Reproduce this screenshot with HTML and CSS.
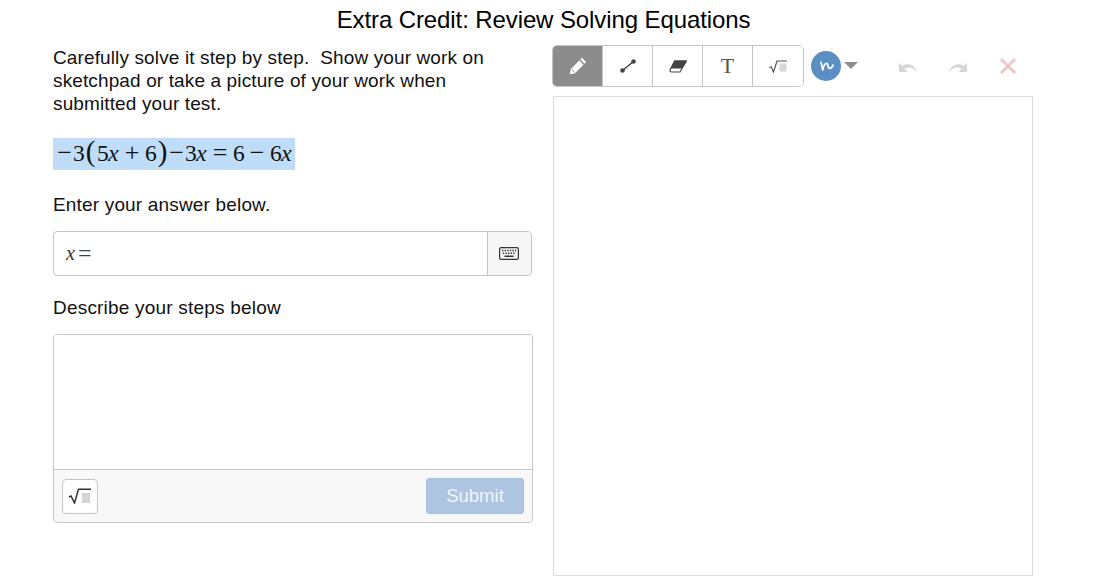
FILE: index.html
```html
<!DOCTYPE html>
<html lang="en">
<head>
<meta charset="utf-8">
<title>Extra Credit: Review Solving Equations</title>
<link rel="stylesheet" href="styles.css">
</head>
<body>
<h1 class="title">Extra Credit: Review Solving Equations</h1>
<main class="layout">
  <section class="left">
    <p class="prompt">Carefully solve it step by step.&nbsp; Show your work on sketchpad or take a picture of your work when submitted your test.</p>
    <div class="equation"><span class="sel"><span class="m">−</span><span class="d">3</span><span class="paren">(</span><span class="d">5</span><i>x</i><span class="m bin">+</span><span class="d">6</span><span class="paren">)</span><span class="m">−</span><span class="d">3</span><i>x</i><span class="m bin">=</span><span class="d">6</span><span class="m bin">−</span><span class="d">6</span><i>x</i></span></div>
    <p class="label enter">Enter your answer below.</p>
    <div class="answer">
      <div class="answer-field"><i>x</i><span class="eq">=</span></div>
      <div class="kbd">
        <svg width="20" height="13" viewBox="0 0 20 13"><rect x="0.6" y="0.6" width="18.8" height="11.8" rx="1.5" fill="none" stroke="#333" stroke-width="1.2"/><path d="M3 3.500h1.400M5.600 3.500H7M8.200 3.500h1.400M10.800 3.500h1.400M13.400 3.500h1.400M16 3.500h1.200M3.800 6.200h1.400M6.400 6.200h1.400M9 6.200h1.400M11.600 6.200h1.400M14.200 6.200h1.400M5.500 9.300h9" stroke="#333" stroke-width="1.500" fill="none"/></svg>
      </div>
    </div>
    <p class="label describe">Describe your steps below</p>
    <div class="editor">
      <div class="editor-area"></div>
      <div class="editor-foot">
        <button class="sqrt-btn" type="button">
          <svg width="24" height="16" viewBox="0 0 24 16"><path d="M1 9l2-1 3.500 7L10.500 1.200H23" fill="none" stroke="#333" stroke-width="1.500"/><rect x="14" y="5" width="8" height="10" fill="#d4d4d4"/></svg>
        </button>
        <button class="submit" type="button">Submit</button>
      </div>
    </div>
  </section>
  <section class="right">
    <div class="toolbar">
      <div class="tools">
        <div class="tool active">
          <svg width="18" height="18" viewBox="0 0 18 18"><path d="M13 .8l4.200 4.200-1.700 1.700-4.200-4.200zM10.300 3.500l4.200 4.200-8.500 8.500-5.200 1.100 1-5.300z" fill="#fff"/><path d="M2.800 12.500l2.700 2.700" stroke="#8c8c8c" stroke-width="1"/></svg>
        </div>
        <div class="tool">
          <svg width="18" height="14" viewBox="0 0 18 14"><path d="M3.500 11.500L14.500 2.500" stroke="#444" stroke-width="1.600"/><circle cx="3.500" cy="11.500" r="2.300" fill="#444"/><circle cx="14.500" cy="2.500" r="2.300" fill="#444"/></svg>
        </div>
        <div class="tool">
          <svg width="18" height="13" viewBox="0 0 18 13"><path d="M5.500 1H17.500L11 12H2.500A1.500 1.500 0 0 1 1.200 9.800z" fill="#fff" stroke="#444" stroke-width="1.200"/><path d="M5.500 .6H17.800L13 8.500H1.800z" fill="#444"/></svg>
        </div>
        <div class="tool tool-t">T</div>
        <div class="tool">
          <svg width="19" height="13" viewBox="0 0 19 13"><path d="M.5 7.500l1.700-.8 2.300 5.300L8 1H18" fill="none" stroke="#555" stroke-width="1.200"/><rect x="10.500" y="3.500" width="7" height="8" fill="#d8d8d8"/></svg>
        </div>
      </div>
      <div class="pen-pick">
        <div class="pen-dot">
          <svg width="16" height="14" viewBox="0 0 16 14"><path d="M3 3.300L4.700 11C5.500 7 7 4.300 8.700 4.300 10.500 4.300 9.500 9.300 11.300 9.300 13 9.300 14.500 8 15 6" fill="none" stroke="#fff" stroke-width="1.700" stroke-linecap="round" stroke-linejoin="round"/></svg>
        </div>
        <span class="caret"></span>
      </div>
      <div class="actions">
        <svg class="act" width="20" height="12" viewBox="0 0 20 12"><path d="M1 2V11H9.500L6.500 8C10 5.500 15 6 19 11 18 5.500 10.500 .5 4.500 5z" fill="#d6d6d6"/></svg>
        <svg class="act redo" width="20" height="12" viewBox="0 0 20 12"><path d="M19 2V11H10.500L13.500 8C10 5.500 5 6 1 11 2 5.500 9.500 .5 15.500 5z" fill="#d6d6d6"/></svg>
        <svg width="18" height="16" viewBox="0 0 18 16"><path d="M2 1L16 15M16 1L2 15" stroke="#ecc8ca" stroke-width="3"/></svg>
      </div>
    </div>
    <div class="canvas"></div>
  </section>
</main>
</body>
</html>
```
FILE: styles.css
```css
* { box-sizing: border-box; }
html, body { margin: 0; padding: 0; }
body {
  width: 1087px;
  height: 584px;
  overflow: hidden;
  background: #fff;
  color: #111;
  font-family: "Liberation Sans", Arial, sans-serif;
}
.title {
  margin: 0;
  padding-top: 6px;
  height: 44px;
  text-align: center;
  font-size: 24px;
  line-height: 28px;
  font-weight: 400;
  letter-spacing: -0.1px;
  color: #000;
}
.layout {
  display: flex;
  gap: 20px;
  padding-left: 53px;
}
.left { width: 480px; }
.right { width: 480px; }
.prompt {
  margin: 0;
  padding-top: 2px;
  font-size: 19px;
  line-height: 23px;
  height: 70px;
  letter-spacing: 0.125px;
}
.equation {
  margin-top: 24px;
  height: 32px;
  font-family: "Liberation Serif", serif;
  font-size: 23.500px;
  line-height: 30px;
  color: #111;
}
.equation i {
  display: inline-block;
  width: 11px;
  font-size: 24px;
}
.sel {
  display: flex;
  align-items: baseline;
  height: 32px;
  width: 242px;
  padding-left: 4px;
  background: #bfdcf8;
  white-space: nowrap;
}
.d { width: 11px; }
.m {
  width: 15px;
  margin-right: 1px;
  font-size: 26px;
  line-height: 26px;
  text-align: center;
}
.m.bin { margin: 0 5.5px; }
.paren {
  width: 10px;
  margin: 0 1.500px;
  font-size: 29px;
  line-height: 26px;
  text-align: center;
}
.label {
  margin: 0;
  font-size: 19px;
  line-height: 23px;
  letter-spacing: 0.17px;
}
.enter { margin-top: 23px; }
.answer {
  margin-top: 15px;
  width: 479px;
  height: 45px;
  display: flex;
  border: 1px solid #c4c4c4;
  border-radius: 4px;
  overflow: hidden;
}
.answer-field {
  flex: 1;
  display: flex;
  align-items: center;
  padding-left: 12px;
  font-family: "Liberation Serif", serif;
  font-size: 20px;
  color: #333;
}
.answer-field .eq {
  margin-left: 3px;
  font-size: 24px;
  font-weight: 400;
  color: #444;
}
.kbd {
  width: 44px;
  padding-right: 2px;
  display: flex;
  align-items: center;
  justify-content: center;
  background: #f6f6f6;
  border-left: 1px solid #c4c4c4;
}
.describe { margin-top: 20px; letter-spacing: 0.2px; }
.editor {
  margin-top: 15px;
  height: 189px;
  display: flex;
  flex-direction: column;
  border: 1px solid #c4c4c4;
  border-radius: 4px;
  overflow: hidden;
}
.editor-area { height: 134px; background: #fff; }
.editor-foot {
  flex: 1;
  display: flex;
  align-items: center;
  justify-content: space-between;
  padding: 0 8px;
  background: #f8f8f8;
  border-top: 1px solid #c4c4c4;
}
.sqrt-btn {
  width: 36px;
  height: 35px;
  padding: 0;
  display: flex;
  align-items: center;
  justify-content: center;
  background: #fff;
  border: 1px solid #c4c4c4;
  border-radius: 4px;
}
.submit {
  width: 98px;
  height: 36px;
  padding: 0;
  border: 1px solid #a9c2de;
  border-radius: 3px;
  background: #adc5e0;
  color: #f2f6fa;
  font-family: "Liberation Sans", Arial, sans-serif;
  font-size: 18.500px;
}
.toolbar {
  height: 57px;
  margin-top: -5px;
  padding-top: 6px;
  margin-left: -1px;
  display: flex;
  align-items: flex-start;
}
.tools {
  display: flex;
  width: 252px;
  height: 42px;
  border: 1px solid #c4c4c4;
  border-radius: 5px;
  overflow: hidden;
}
.tool {
  width: 50px;
  display: flex;
  align-items: center;
  justify-content: center;
  border-left: 1px solid #c4c4c4;
  background: #fff;
}
.tool:first-child { width: 49px; border-left: 0; }
.tool:last-child { flex: 1; }
.tool.active { background: #8c8c8c; }
.tool-t {
  font-family: "Liberation Serif", serif;
  font-size: 22px;
  color: #555;
}
.pen-pick {
  display: flex;
  align-items: center;
  height: 42px;
  margin-left: 7px;
}
.pen-dot {
  width: 30px;
  height: 30px;
  border-radius: 50%;
  background: #5b8fc4;
  display: flex;
  align-items: center;
  justify-content: center;
}
.caret {
  margin-left: 3px;
  margin-top: -1px;
  width: 0;
  height: 0;
  border-left: 7px solid transparent;
  border-right: 7px solid transparent;
  border-top: 7px solid #8e8e8e;
}
.actions {
  display: flex;
  align-items: center;
  gap: 31px;
  height: 42px;
  margin-left: 40px;
}
.act { margin-top: 2px; }
.redo { margin-left: -1px; }
.canvas {
  height: 480px;
  width: 480px;
  border: 1px solid #dedede;
}
```
